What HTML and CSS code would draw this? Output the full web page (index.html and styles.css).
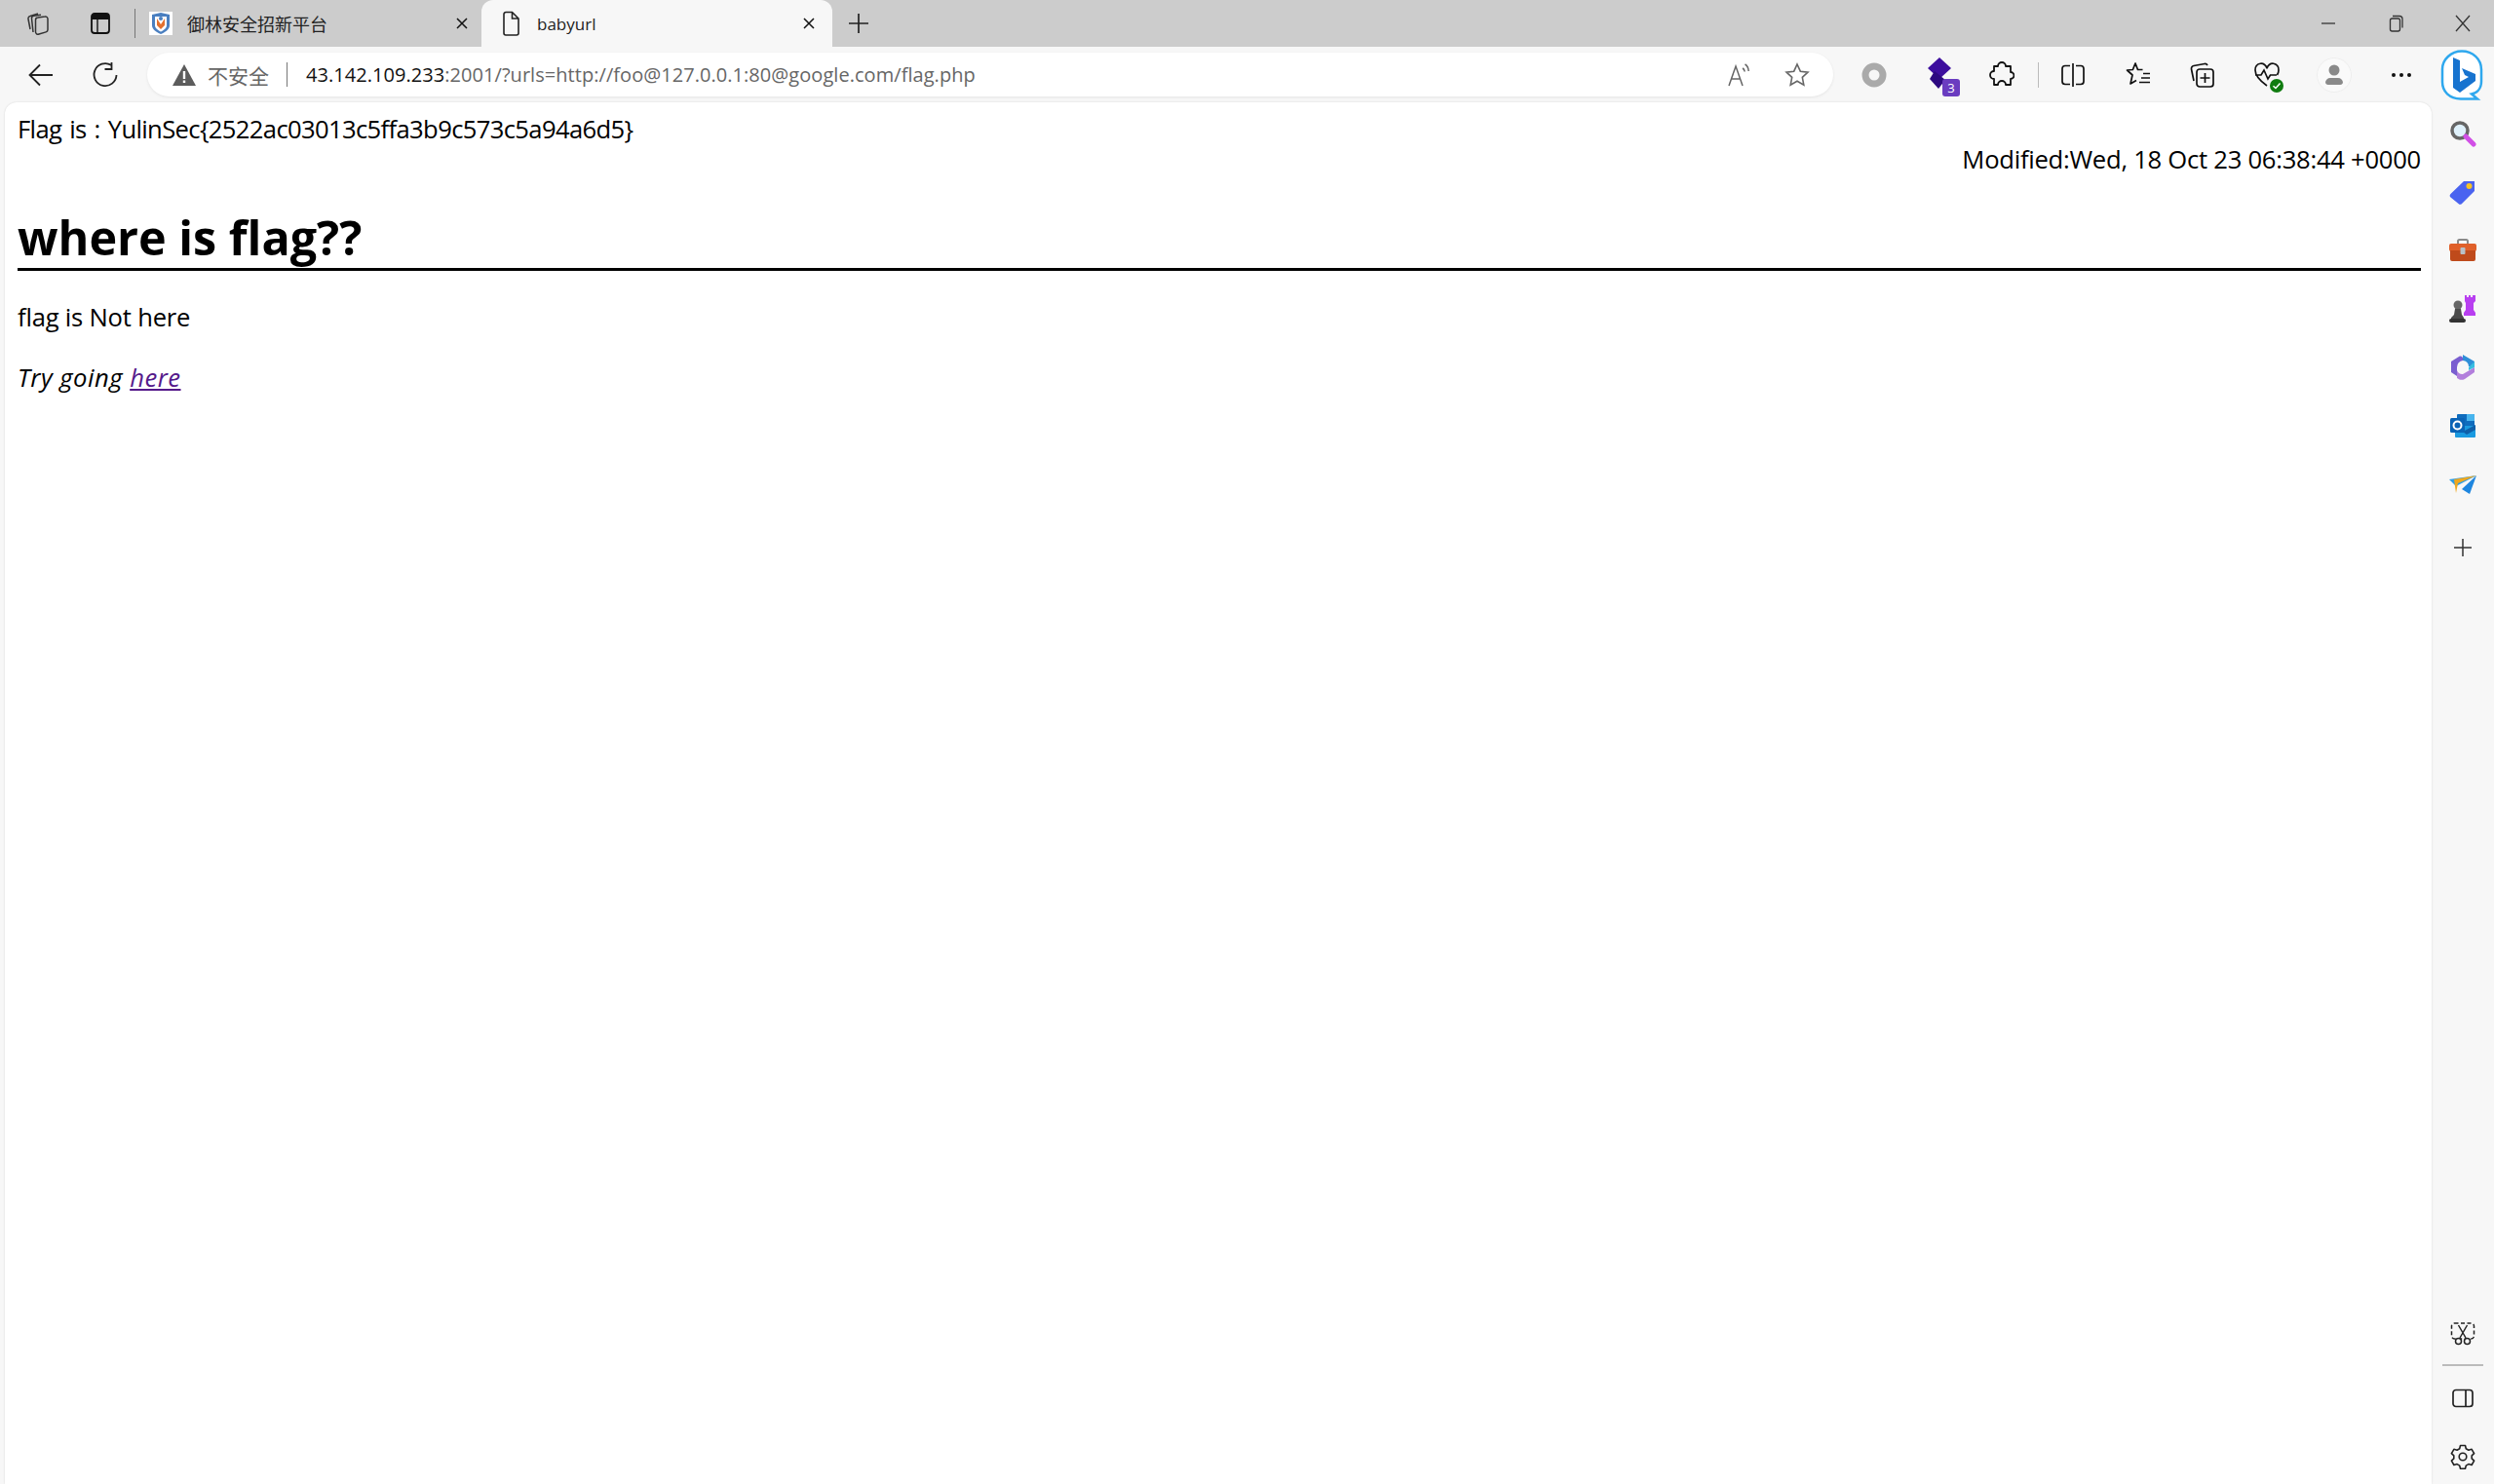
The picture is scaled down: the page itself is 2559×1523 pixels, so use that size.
FILE: index.html
```html
<!DOCTYPE html><html>
<head>
  <meta charset="utf-8">
  <meta name="viewport" content="width=device-width, initial-scale=1.0">
  <title>babyurl</title>
  <link rel="stylesheet" href="styles.css">
</head><body>

<div class="tabstrip">
  <span class="ico ico-tabs"><svg width="26" height="26" viewBox="0 0 26 26" fill="none" stroke="#333" stroke-width="1.500"><path d="M5 19 3 8.500a2.500 2.500 0 0 1 2-3L13 3"/><path d="M8 22 6.500 8a2.500 2.500 0 0 1 2.200-2.700L16 4.200"/><path d="M10.500 9.500a2.500 2.500 0 0 1 2.500-2.500l7-1a2.500 2.500 0 0 1 3 2.500v11a2.500 2.500 0 0 1-1.800 2.400L14 24a2.500 2.500 0 0 1-3.500-2.400z"/></svg></span>
  <span class="ico ico-vtabs"><svg width="24" height="24" viewBox="0 0 24 24" fill="none" stroke="#111" stroke-width="1.800"><rect x="3" y="2" width="18" height="20" rx="3"/><path d="M3 5.500h18" stroke-width="5"/><path d="M9 8v14" stroke-width="1.400"/></svg></span>
  <span class="tab-sep"></span>
  <div class="tab">
    <svg class="favicon" width="24" height="24" viewBox="0 0 24 24"><rect width="24" height="24" fill="#fff"/><path d="M3 3 12 1l9 2v11c0 4-4 7-9 9-5-2-9-5-9-9z" fill="#4a7fc0"/><path d="M6 5h12v9c0 3-3 5-6 6.500C9 19 6 17 6 14z" fill="#fff"/><path d="M8 7l4 6 4-6v7l-4 4-4-4z" fill="#e2702f"/><circle cx="12" cy="7" r="2" fill="#4a7fc0"/></svg>
    <span class="tab-title tab-title-cn">御林安全招新平台</span>
    <svg class="tab-close" width="14" height="14" viewBox="0 0 14 14" stroke="#111" stroke-width="1.500"><path d="M2 2l10 10M12 2 2 12"/></svg>
  </div>
  <div class="tab tab-active">
    <svg class="doc" width="20" height="26" viewBox="0 0 20 26" fill="none" stroke="#222" stroke-width="1.600"><path d="M3 3.500a2 2 0 0 1 2-2h6.500L18 8v15a2 2 0 0 1-2 2H5a2 2 0 0 1-2-2zM11.500 1.500V8H18"/></svg>
    <span class="tab-title">babyurl</span>
    <svg class="tab-close" width="14" height="14" viewBox="0 0 14 14" stroke="#111" stroke-width="1.500"><path d="M2 2l10 10M12 2 2 12"/></svg>
  </div>
  <svg class="newtab" width="22" height="22" viewBox="0 0 22 22" stroke="#222" stroke-width="1.700"><path d="M11 1v20M1 11h20"/></svg>
  <div class="winbtns">
    <svg width="18" height="18" viewBox="0 0 18 18" stroke="#333" stroke-width="1.300"><path d="M2 9h14"/></svg>
    <svg width="18" height="18" viewBox="0 0 18 18" fill="none" stroke="#333" stroke-width="1.300"><rect x="3.500" y="4" width="10" height="13" rx="2"/><path d="M6 1.500h7a3 3 0 0 1 3 3v9"/></svg>
    <svg width="18" height="18" viewBox="0 0 18 18" stroke="#333" stroke-width="1.300"><path d="M2 1l14 16M16 1 2 17"/></svg>
  </div>
</div>

<div class="toolbar">
  <svg class="nav-back" width="28" height="28" viewBox="0 0 28 28" fill="none" stroke="#222" stroke-width="1.800"><path d="M26 14H3M13 3.500 2.500 14 13 24.500"/></svg>
  <svg class="nav-reload" width="28" height="28" viewBox="0 0 28 28" fill="none" stroke="#222" stroke-width="1.800"><path d="M20 3.800A11.500 11.500 0 1 0 25.500 14M20.500 1v7h-7"/></svg>
  <div class="addressbar">
    <svg class="warn" width="24" height="22" viewBox="0 0 24 22"><path d="M12 0 24 22H0z" fill="#5c5c5c"/><path d="M10.800 7h2.400v8h-2.400zM10.800 16.500h2.400V19h-2.400z" fill="#fff"/></svg>
    <span class="insecure">不安全</span>
    <span class="addr-sep"></span>
    <span class="url"><b>43.142.109.233</b>:2001/?urls=http://foo@127.0.0.1:80@google.com/flag.php</span>
    <svg class="read" width="26" height="26" viewBox="0 0 26 26" fill="none" stroke="#666" stroke-width="1.500"><path d="M2 24 9 4l7 20M4.500 17h9M16 6c1.500.8 2 2 2.200 3.500M18.500 2c2.500 1.500 3.500 4 3.700 7"/></svg>
    <svg class="star" width="26" height="26" viewBox="0 0 26 26" fill="none" stroke="#666" stroke-width="1.600"><path d="M13 2l3.300 7.200 7.700.9-5.700 5.300 1.500 7.700-6.800-3.900-6.800 3.900 1.500-7.700L2 10.100l7.700-.9z"/></svg>
  </div>
  <div class="tools">
    <svg class="t-ring" width="26" height="26" viewBox="0 0 26 26"><circle cx="13" cy="13" r="9" fill="none" stroke="#aaa" stroke-width="7"/></svg>
    <span class="t-badge">
      <svg width="36" height="36" viewBox="0 0 36 36"><path d="M15 0l12 11-12 11L3 11z" fill="#3d0e9e"/><path d="M10 14l11 9-7 9-9-10z" fill="#2d0a80"/></svg>
      <i class="badge-num">3</i>
    </span>
    <svg class="t-puzzle" width="26" height="28" viewBox="0 0 26 28" fill="none" stroke="#111" stroke-width="1.800"><path d="M9 5a4 4 0 0 1 8 0h5v6a3.500 3.500 0 0 1 0 7v6h-5a4 4 0 0 0-8 0H5v-6a4 4 0 0 1 0-8V5z" stroke-linejoin="round"/></svg>
    <span class="tool-sep"></span>
    <svg class="t-split" width="26" height="26" viewBox="0 0 26 26" fill="none" stroke="#111" stroke-width="1.700"><path d="M10 3.500H5a3 3 0 0 0-3 3v13a3 3 0 0 0 3 3h5M16 3.500h5a3 3 0 0 1 3 3v13a3 3 0 0 1-3 3h-5M13 1v24"/></svg>
    <svg class="t-fav" width="28" height="28" viewBox="0 0 28 28" fill="none" stroke="#111" stroke-width="1.700"><path d="M17.500 8.500h-5L10 2 7.400 8.500 1.500 9l5.500 5-2 9 6-3.500M18 12.500h7M16 17h9M14 21.500h11" stroke-linejoin="round"/></svg>
    <svg class="t-coll" width="28" height="28" viewBox="0 0 28 28" fill="none" stroke="#111" stroke-width="1.700"><path d="M5 20 2.500 8a3 3 0 0 1 2.400-3.500L16 2.500a3 3 0 0 1 3 1.500"/><rect x="8" y="8" width="17" height="18" rx="3"/><path d="M16.500 12v10M11.500 17h10"/></svg>
    <span class="t-health">
      <svg width="28" height="28" viewBox="0 0 28 28" fill="none" stroke="#111" stroke-width="1.700"><path d="M14 25C7 20 2 15 2 9a6 6 0 0 1 12-1.500A6 6 0 0 1 26 9c0 2-.5 3.500-1.500 5M2 14h6l3-5 4 9 2.500-4H24"/></svg>
      <svg class="health-ok" width="14" height="14" viewBox="0 0 14 14"><circle cx="7" cy="7" r="7" fill="#107c10"/><path d="M3.500 7.200l2.500 2.300 4.500-5" fill="none" stroke="#fff" stroke-width="1.500"/></svg>
    </span>
    <svg class="t-profile" width="36" height="36" viewBox="0 0 36 36"><circle cx="18" cy="18" r="17.500" fill="#fafafa" stroke="#eee"/><circle cx="18" cy="13" r="5.500" fill="#8a8a8a"/><path d="M9 26a5 5 0 0 1 5-5h8a5 5 0 0 1 5 5 3 3 0 0 1-3 2H12a3 3 0 0 1-3-2z" fill="#8a8a8a"/></svg>
    <svg class="t-more" width="22" height="6" viewBox="0 0 22 6" fill="#111"><circle cx="3" cy="3" r="2"/><circle cx="11" cy="3" r="2"/><circle cx="19" cy="3" r="2"/></svg>
    <svg class="t-bing" width="46" height="52" viewBox="0 0 46 52"><path d="M23 1.500c11 0 20 8 20 19v12c0 8-5 12-10 13l6 5H22C10 50 3 43 3 33V20C3 10 12 1.500 23 1.500z" fill="#fff" stroke="#2fa8ee" stroke-width="2.500"/><path d="M14 8l7 3v22l9-5-4-2-3-7 14 6v7L21 44l-7-5z" fill="#1773cf"/></svg>
  </div>
</div>

<div class="main">
  <div class="page">
    <div class="flag">Flag is : YulinSec{2522ac03013c5ffa3b9c573c5a94a6d5}</div>
    <div class="modified">Modified:Wed, 18 Oct 23 06:38:44 +0000</div>
    <h1>where is flag??</h1>
    <p class="note">flag is Not here</p>
    <p class="try"><em>Try going <a href="#">here</a></em></p>
  </div>
  <div class="sidebar">
    <div class="side-top">
      <svg width="28" height="28" viewBox="0 0 28 28" fill="none"><circle cx="11" cy="11" r="8" fill="#dff1fb" stroke="#666" stroke-width="3.500"/><path d="M17 17l8 8" stroke="#d14fe6" stroke-width="5" stroke-linecap="round"/></svg>
      <svg width="28" height="28" viewBox="0 0 28 28"><path d="M1.500 16 15 3h11v10L13 26a2.500 2.500 0 0 1-3.500 0L1.500 19.500a2.500 2.500 0 0 1 0-3.500z" fill="#4a63f0"/><circle cx="20.500" cy="8" r="3" fill="#f6c324"/></svg>
      <svg width="28" height="26" viewBox="0 0 28 26"><path d="M9 6V3.500A1.500 1.500 0 0 1 10.500 2h7A1.500 1.500 0 0 1 19 3.500V6" fill="none" stroke="#8a8a8a" stroke-width="2"/><rect y="6" width="28" height="8" rx="2" fill="#e0602a"/><path d="M1 13h26v9a2 2 0 0 1-2 2H3a2 2 0 0 1-2-2z" fill="#bf4a1b"/><rect x="11.500" y="10" width="5" height="7" rx="1" fill="#b9c0c6"/></svg>
      <svg width="30" height="30" viewBox="0 0 30 30"><path d="M17 1h2v2h2V1h2v2h2V1h3v6l-2 2v7l2 3v3H16v-3l2-3V9l-1-2z" fill="#b83ff0"/><circle cx="10" cy="11" r="4.500" fill="#666"/><path d="M7 15h6l1 6 2 3v2H3v-2l3-3z" fill="#4a4a4a"/><rect x="1" y="25" width="17" height="4" rx="2" fill="#333"/></svg>
      <svg width="26" height="28" viewBox="0 0 26 28"><path d="M13 1 25 8v5h-6a6 6 0 0 0-6-6z" fill="#2f8fd8"/><path d="M1 8l8-5c2-1 3 0 4 1v3a7 7 0 0 0-6 7v9l-6-4z" fill="#7a5ed0"/><path d="M7 17a6 6 0 0 0 6 4l12-7v5L15 26c-3 1.500-5 1-8-1z" fill="#b27fdc"/><path d="M25 8v6l-6 3v-3z" fill="#38bde0"/></svg>
      <svg width="26" height="26" viewBox="0 0 26 26"><rect x="7" y="1" width="18" height="14" rx="1" fill="#0f6cbd"/><path d="M17 1h7a1 1 0 0 1 1 1v6h-8z" fill="#47b4ee"/><path d="M5 13h21v11a1 1 0 0 1-1 1H6a1 1 0 0 1-1-1z" fill="#1a9ae0"/><path d="M13 19l13-7v5l-9 5z" fill="#0f5fa8"/><rect y="5" width="15" height="15" rx="1.500" fill="#0a63b5"/><circle cx="7.500" cy="12.500" r="4" fill="none" stroke="#fff" stroke-width="2"/></svg>
      <svg class="side-send" width="28" height="22" viewBox="0 0 28 22"><path d="M0 5 28 1 7 12z" fill="#2d9ee8"/><path d="M28 1 21 20l-8-5z" fill="#1e86df"/><path d="M5 5 28 1 9 9l-2 10z" fill="#f0a81e"/></svg>
      <svg class="side-plus" width="20" height="20" viewBox="0 0 20 20" stroke="#333" stroke-width="1.500"><path d="M10 1v18M1 10h18"/></svg>
    </div>
    <div class="side-bottom">
      <svg width="26" height="24" viewBox="0 0 26 24" fill="none" stroke="#222" stroke-width="1.500"><rect x="1.500" y="1" width="23" height="16" rx="3" stroke-dasharray="4 2.500"/><path d="M8.500 3l7.500 13M17.500 3 10 16"/><circle cx="8.500" cy="19.500" r="3" fill="#f7f7f7"/><circle cx="17.500" cy="19.500" r="3" fill="#f7f7f7"/></svg>
      <span class="side-sep"></span>
      <svg class="side-panel" width="22" height="20" viewBox="0 0 22 20" fill="none" stroke="#222" stroke-width="1.700"><rect x="1" y="1.500" width="20" height="17" rx="3"/><path d="M14 1.500v17"/></svg>
      <svg class="side-gear" width="26" height="26" viewBox="0 0 26 26" fill="none" stroke="#222" stroke-width="1.600"><path d="M10.500 1.500h5l.8 3.200 2.600 1.500 3.200-.9 2.500 4.300-2.400 2.300v3l2.400 2.300-2.500 4.300-3.200-.9-2.600 1.500-.8 3.200h-5l-.8-3.200-2.600-1.500-3.200.9-2.500-4.300 2.400-2.300v-3L1.400 9.600l2.500-4.300 3.200.9 2.600-1.500z" stroke-linejoin="round"/><circle cx="13" cy="13" r="3.800"/></svg>
    </div>
  </div>
</div>

</body></html>
```

FILE: styles.css
```css
* { box-sizing: border-box; }
html, body { height: 100%; }
body {
  margin: 0;
  overflow: hidden;
  display: flex;
  flex-direction: column;
  color: #000;
  background: #f7f7f7;
  font-family: "Open Sans", "Noto Sans CJK SC", sans-serif;
}
svg { display: block; flex: none; }

.tabstrip { height: 48px; flex: none; display: flex; align-items: center; background: #ccc; padding-left: 26px; }
.ico-tabs { margin-right: 39px; }
.ico-vtabs { margin-right: 23px; }
.tab-sep { width: 1px; height: 30px; background: #777; margin-right: 14px; }
.tab { width: 360px; height: 48px; display: flex; align-items: center; font-size: 17px; color: #222; }
.tab .favicon { margin-right: 15px; }
.tab-title { flex: 1; }
.tab-title-cn { font-size: 18px; }
.tab .tab-close { margin-right: 32px; }
.tab-active { margin-left: -19px; padding-left: 20px; background: #f7f7f7; border-radius: 12px 12px 0 0; }
.tab-active .doc { margin-right: 17px; }
.tab-active .tab-close { margin-right: 17px; }
.newtab { margin-left: 16px; }
.winbtns { margin-left: auto; display: flex; gap: 51px; padding-right: 23px; }

.toolbar { height: 57px; flex: none; display: flex; align-items: center; }
.nav-back { margin-left: 28px; }
.nav-reload { margin-left: 38px; }
.addressbar { width: 1730px; height: 45px; margin-left: 29px; padding: 0 24px 0 26px; display: flex; align-items: center; background: #fff; border-radius: 23px; box-shadow: 0 1px 3px rgba(0,0,0,.08); }
.insecure { margin-left: 12px; font-size: 21px; color: #666; }
.addr-sep { width: 1px; height: 25px; background: #777; margin: 0 19px 0 18px; }
.url { flex: 1; font-size: 20px; letter-spacing: .05px; color: #666; white-space: nowrap; }
.url b { font-weight: 400; color: #111; }
.read { margin-right: 33px; }

.tools { display: flex; align-items: center; margin-left: 29px; flex: 1; }
.t-badge { position: relative; width: 36px; height: 36px; margin-left: 39px; }
.badge-num { position: absolute; right: 0; bottom: -4px; width: 18px; height: 18px; background: #6a3cc0; border-radius: 3px; color: #fff; font-size: 13px; font-style: normal; line-height: 18px; text-align: center; }
.t-puzzle { margin-left: 30px; }
.tool-sep { width: 1px; height: 26px; background: #bbb; margin-left: 24px; }
.t-split { margin-left: 22px; }
.t-fav { margin-left: 41px; }
.t-coll { margin-left: 37px; }
.t-health { position: relative; width: 28px; height: 28px; margin-left: 38px; }
.health-ok { position: absolute; right: -3px; bottom: -4px; }
.t-profile { margin-left: 37px; }
.t-more { margin-left: 40px; }
.t-bing { margin-left: 28px; }

.main { flex: 1; display: flex; min-height: 0; }
.page { width: 2490px; margin-left: 5px; padding: 13px 11px 0 13px; background: #fff; border-radius: 12px 12px 0 0; box-shadow: 0 0 2px rgba(0,0,0,.15); font-size: 25.6px; line-height: 30px; }
.flag { height: 30px; letter-spacing: -.64px; word-spacing: 2px; }
.modified { text-align: right; height: 30px; padding-top: 1px; letter-spacing: -.25px; }
h1 { margin: 34px 0 0; height: 66px; font-size: 48.5px; line-height: 62px; font-weight: 700; border-bottom: 3px solid #000; }
p { margin: 0 0 32px; }
.note { margin-top: 33px; letter-spacing: -.2px; }
.try { letter-spacing: .5px; }
a { color: #551a8b; }

.sidebar { flex: 1; display: flex; flex-direction: column; justify-content: space-between; align-items: center; padding: 2px 0 15px; }
.side-top { display: grid; grid-auto-rows: 60px; place-items: center; }
.side-send { margin-top: 2px; }
.side-plus { margin-top: 10px; }
.side-bottom { display: flex; flex-direction: column; align-items: center; }
.side-sep { width: 42px; height: 2px; background: #bbb; margin: 19px 0 23px; }
.side-panel { margin-bottom: 37px; }
```
